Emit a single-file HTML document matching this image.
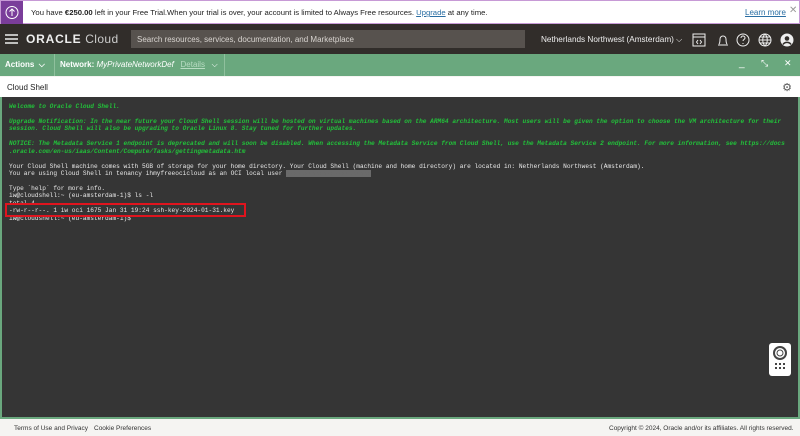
<!DOCTYPE html>
<html><head><style>
*{margin:0;padding:0;box-sizing:border-box}
body{width:800px;height:436px;overflow:hidden;font-family:"Liberation Sans",sans-serif;background:#f5f4f2;position:relative}
.ban{position:absolute;top:0;left:0;width:800px;height:24px;background:#fff;border:1px solid #c79ad6;}
.ban .ic{position:absolute;left:0;top:0;width:22px;height:23px;background:#7a3d9a;}
.ban .t{position:absolute;left:30px;top:7px;font-size:7.7px;color:#222}
.nav{position:absolute;top:24px;left:0;width:800px;height:30px;background:#312d2a;color:#eee}
.srch{position:absolute;left:131px;top:6px;width:394px;height:18px;background:#57524e;color:#d8d4d0;font-size:8px;padding:5px 6px}
.grn{position:absolute;top:54px;left:0;width:800px;height:22px;background:#6aa87e;color:#fff;font-size:8px}
.csh{position:absolute;top:77px;left:0;width:800px;height:20px;background:#fff;font-size:8px;color:#222;padding:6px 7px}
.term{position:absolute;top:97px;left:0;width:800px;height:322px;background:#353535;border:2px solid #6aa87e;border-top:0}
pre{position:absolute;left:7px;top:6px;font-family:"Liberation Mono",monospace;font-size:6.16px;line-height:7.45px;color:#e8e8e8}
.g{color:#22c03a;font-style:italic;font-weight:bold}
.ft{position:absolute;top:419px;left:0;width:800px;height:17px;font-size:6.5px;color:#333}
</style></head><body>
<div class="ban"><div class="ic"><svg width="22" height="23"><circle cx="11" cy="11.5" r="6" fill="none" stroke="#fff" stroke-width="1"/><path d="M11 15V8M8.5 10.5L11 8l2.5 2.5" fill="none" stroke="#fff"/></svg></div>
<div class="t">You have <b>€250.00</b> left in your Free Trial.When your trial is over, your account is limited to Always Free resources. <u style="color:#2a6ea3">Upgrade</u> at any time.</div>
<div style="position:absolute;left:744px;top:7px;font-size:8px;color:#2a6ea3;text-decoration:underline">Learn more</div>
<div style="position:absolute;left:788px;top:4px;font-size:10px;color:#999">✕</div></div>
<div class="nav">
<svg style="position:absolute;left:5px;top:10px" width="13" height="10"><path d="M0 1h13M0 5h13M0 9h13" stroke="#eee" stroke-width="1.5"/></svg>
<div style="position:absolute;left:26px;top:8px;font-size:12px;letter-spacing:.4px"><span style="font-weight:bold;letter-spacing:.8px">ORACLE</span> <span style="color:#ccc">Cloud</span></div>
<div class="srch">Search resources, services, documentation, and Marketplace</div>
<div style="position:absolute;left:541px;top:11px;font-size:8.2px">Netherlands Northwest (Amsterdam) ⌵</div>
<svg style="position:absolute;left:690px;top:8px" width="110" height="16" fill="none" stroke="#eee" stroke-width="1">
<rect x="3" y="2" width="12" height="12"/><path d="M3 5h12M8 8l-1.5 2 1.5 2M10 8l1.5 2-1.5 2"/>
<path d="M28 13h10M29 12c1-1 1-3 1-5a3 3 0 016 0c0 2 0 4 1 5"/>
<circle cx="53" cy="8" r="6"/><path d="M51 6a2 2 0 114 0c0 1.5-2 1.5-2 3M53 11v1"/>
<circle cx="75" cy="8" r="6"/><path d="M69 8h12M75 2c-3 3-3 9 0 12M75 2c3 3 3 9 0 12M70 5h10M70 11h10"/>
<circle cx="97" cy="8" r="6" fill="#eee"/><circle cx="97" cy="6.5" r="2.3" fill="#312d2a" stroke="none"/><path d="M93 12.5a4.5 4 0 018 0" stroke="#312d2a" stroke-width="1.5"/></svg>
</div>
<div class="grn">
<div style="position:absolute;left:5px;top:6px;font-weight:bold">Actions &nbsp;⌵</div>
<div style="position:absolute;left:54px;top:0;width:1px;height:22px;background:#8fc09d"></div>
<div style="position:absolute;left:60px;top:6px"><b>Network:</b> <i>MyPrivateNetworkDef</i> &nbsp; <u style="color:#b8dcc2">Details</u> &nbsp; ⌵</div>
<div style="position:absolute;left:224px;top:0;width:1px;height:22px;background:#8fc09d"></div>
<div style="position:absolute;left:739px;top:4px;font-size:10px">_</div>
<div style="position:absolute;left:761px;top:4px;font-size:9px">⤡</div>
<div style="position:absolute;left:784px;top:4px;font-size:9px">✕</div>
</div>
<div class="csh">Cloud Shell<span style="position:absolute;right:8px;top:4px;font-size:11px;color:#555">⚙</span></div>
<div class="term"><pre><span class="g">Welcome to Oracle Cloud Shell.

Upgrade Notification: In the near future your Cloud Shell session will be hosted on virtual machines based on the ARM64 architecture. Most users will be given the option to choose the VM architecture for their
session. Cloud Shell will also be upgrading to Oracle Linux 8. Stay tuned for further updates.

NOTICE: The Metadata Service 1 endpoint is deprecated and will soon be disabled. When accessing the Metadata Service from Cloud Shell, use the Metadata Service 2 endpoint. For more information, see https://docs
.oracle.com/en-us/iaas/Content/Compute/Tasks/gettingmetadata.htm</span>

Your Cloud Shell machine comes with 5GB of storage for your home directory. Your Cloud Shell (machine and home directory) are located in: Netherlands Northwest (Amsterdam).
You are using Cloud Shell in tenancy ihmyfreeocicloud as an OCI local user <span style="background:#6a6a6a;color:#6a6a6a">xxxxxxxxxxxxxxxxxxxxxxx</span>

Type `help` for more info.
iw@cloudshell:~ (eu-amsterdam-1)$ ls -l
total 4
-rw-r--r--. 1 iw oci 1675 Jan 31 19:24 ssh-key-2024-01-31.key
iw@cloudshell:~ (eu-amsterdam-1)$</pre>
<div style="position:absolute;left:3px;top:106px;width:241px;height:14px;border:2px solid #e0141e"></div>
<div style="position:absolute;left:767px;top:246px;width:22px;height:33px;background:#fff;border-radius:3px">
<svg width="22" height="33"><circle cx="11" cy="10" r="6" fill="none" stroke="#444" stroke-width="2"/><circle cx="11" cy="10" r="3" fill="none" stroke="#444"/><g fill="#444"><rect x="6" y="20" width="2" height="2"/><rect x="10" y="20" width="2" height="2"/><rect x="14" y="20" width="2" height="2"/><rect x="6" y="24" width="2" height="2"/><rect x="10" y="24" width="2" height="2"/><rect x="14" y="24" width="2" height="2"/></g></svg></div>
</div>
<div class="ft"><span style="position:absolute;left:14px;top:6px">Terms of Use and Privacy</span><span style="position:absolute;left:94px;top:6px">Cookie Preferences</span><span style="position:absolute;left:609px;top:6px">Copyright © 2024, Oracle and/or its affiliates. All rights reserved.</span></div>
</body></html>
